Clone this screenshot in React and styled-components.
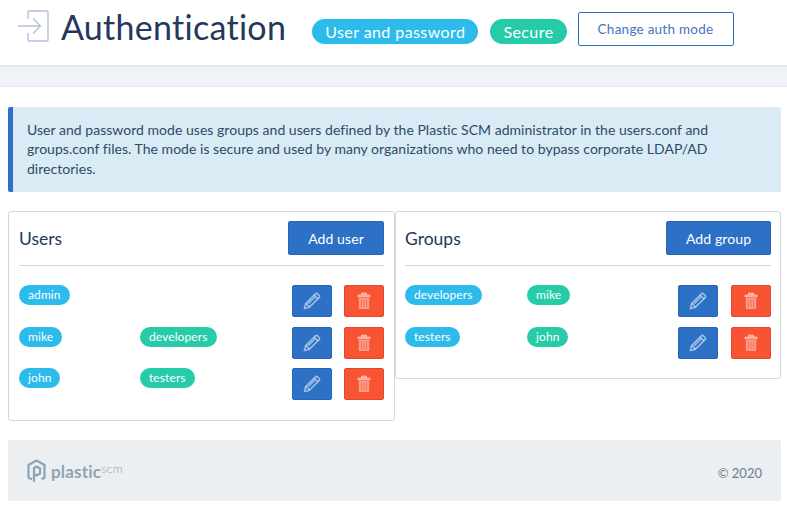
import React from 'react'
import styled, { createGlobalStyle } from 'styled-components'

const GlobalStyle = createGlobalStyle`
  html, body {
    margin: 0;
    background: #fff;
    font-family: Lato, "Open Sans", sans-serif;
    color: #24385b;
  }
  * { box-sizing: border-box; }
`

const Page = styled.div`
  width: 787px;
  height: 505px;
  overflow: hidden;
`

const Header = styled.header`
  display: flex;
  align-items: flex-start;
  height: 67px;
  padding: 10px 0 0 18px;
  border-bottom: 2px solid #e0e9f1;
`

const Title = styled.h1`
  margin: -1px 26px 0 12px;
  font-size: 34px;
  line-height: 36px;
  font-weight: 400;
  color: #24385b;
  letter-spacing: 0.28px;
`

const HeaderIcon = styled.svg`
  width: 31px;
  height: 32px;
  fill: none;
  stroke: #b3c0df;
  stroke-width: 1.4;
`

const Badge = styled.span`
  margin: 9px ${p => p.$green ? 11 : 12}px 0 0;
  padding: 0 13px;
  height: 25px;
  line-height: 25px;
  border-radius: 13px;
  font-size: 16px;
  letter-spacing: 0.42px;
  color: #fff;
  background: ${p => p.$green ? '#26cba8' : '#2dbbeb'};
`

const OutlineButton = styled.button`
  width: 156px;
  height: 34px;
  margin: 2px 0 0 0;
  border: 1px solid #2d71c7;
  border-radius: 2px;
  background: #fff;
  color: #4a72c0;
  font: 13.5px Lato, sans-serif;
  letter-spacing: 0.25px;
`

const Band = styled.div`
  height: 20px;
  background: #eff3f7;
  border-bottom: 1px solid #e0e9f1;
`

const Content = styled.main`
  padding: 20px 6px 0 8px;
`

const Alert = styled.div`
  height: 85px;
  padding: 13px 20px 0 14px;
  border-left: 5px solid #2d71c7;
  border-radius: 2px;
  background: #d9ebf4;
  color: #2f4a68;
  font-size: 14px;
  line-height: 19.3px;
  letter-spacing: 0.03px;
`

const Panels = styled.div`
  display: flex;
  align-items: flex-start;
  margin-top: 19px;
`

const Panel = styled.section`
  width: ${p => p.$width}px;
  height: ${p => p.$height}px;
  padding: 9px ${p => p.$pad}px 0;
  border: 1px solid #d0d9e1;
  border-radius: 3px;
`

const PanelHead = styled.div`
  display: flex;
  justify-content: space-between;
  align-items: center;
  height: 45px;
  padding-bottom: 10px;
  border-bottom: 1px solid #d0d9e1;
  margin-bottom: 19px;
`

const PanelTitle = styled.h2`
  margin: 0;
  font-size: 17.5px;
  font-weight: 400;
  color: #24385b;
`

const AddButton = styled.button`
  width: ${p => p.$width}px;
  height: 34px;
  border: 1px solid #2866b3;
  border-radius: 2px;
  background: #2d71c7;
  color: #fff;
  font: 14px Lato, sans-serif;
  letter-spacing: 0.1px;
`

const Row = styled.div`
  display: grid;
  grid-template-columns: ${p => p.$first}px 1fr auto;
  height: 32px;
  margin-bottom: 9.5px;
`

const Cell = styled.div`
  display: flex;
  align-items: flex-start;
`

const Tag = styled.span`
  height: 20px;
  padding: 0 9px;
  line-height: 20px;
  border-radius: 10px;
  font-size: 12px;
  letter-spacing: 0.1px;
  color: #fff;
  background: ${p => p.$green ? '#26cba8' : '#2dbbeb'};
`

const Actions = styled.div`
  display: flex;
  gap: ${p => p.$gap}px;
`

const IconButton = styled.button`
  display: flex;
  align-items: center;
  justify-content: center;
  width: 40px;
  height: 32px;
  padding: 0;
  border: 1px solid ${p => p.$danger ? '#dd4a30' : '#2866b3'};
  border-radius: 2px;
  background: ${p => p.$danger ? '#f85433' : '#2d71c7'};
`

const PencilGlyph = styled.svg`
  width: 18px;
  height: 18px;
  fill: none;
  stroke: rgba(255, 255, 255, 0.55);
  stroke-width: 1.5;
`

const TrashGlyph = styled.svg`
  width: 14px;
  height: 18px;
`

const Footer = styled.footer`
  display: flex;
  justify-content: space-between;
  height: 61px;
  margin-top: 19px;
  padding: 0 19px;
  border-radius: 3px;
  background: #ebeff2;
`

const Logo = styled.div`
  display: flex;
  align-items: center;
  height: 62px;
  color: #8fa3b5;
`

const LogoMark = styled.svg`
  width: 19px;
  height: 24px;
  fill: none;
  stroke: #8fa3b5;
  stroke-width: 2.2;
`

const LogoName = styled.span`
  margin-left: 5px;
  font-size: 17px;
  font-weight: 700;
  letter-spacing: 0.2px;
`

const LogoSuffix = styled.span`
  font-size: 12.5px;
  font-weight: 300;
  margin-top: -5px;
`

const Copyright = styled.span`
  margin-top: 25px;
  font-size: 13px;
  color: #6d7d8d;
`

const Pencil = () => (
  <PencilGlyph viewBox="0 0 18 18">
    <path d="M1.500 16.500l1.100-4.800L12.400 1.900a1.500 1.500 0 0 1 2.100 0l1.600 1.600a1.500 1.500 0 0 1 0 2.100L6.300 15.400z" />
    <path d="M2.900 11.500l3.600 3.600M11.200 3.200l3.600 3.600M5.200 11.800l7.800-7.800" />
  </PencilGlyph>
)

const Trash = () => (
  <TrashGlyph viewBox="0 0 14 18">
    <path d="M1 3h12v2H1zM4.500 3V1h5v2" fill="rgba(255,255,255,0.4)" stroke="rgba(255,255,255,0.45)" />
    <path d="M1.800 6h10.400v11H1.800z" fill="rgba(255,255,255,0.42)" />
    <path d="M4.500 7.500v8M7 7.500v8M9.500 7.500v8" stroke="rgba(248,84,51,0.6)" strokeWidth="1" fill="none" />
  </TrashGlyph>
)

const ItemRow = ({ name, group, first, gap }) => (
  <Row $first={first}>
    <Cell><Tag>{name}</Tag></Cell>
    <Cell>{group && <Tag $green>{group}</Tag>}</Cell>
    <Actions $gap={gap}>
      <IconButton><Pencil /></IconButton>
      <IconButton $danger><Trash /></IconButton>
    </Actions>
  </Row>
)

export default function App() {
  return (
    <Page>
      <GlobalStyle />
      <Header>
        <HeaderIcon viewBox="0 0 31 32">
          <path d="M10 9V2a1 1 0 0 1 1-1h18a1 1 0 0 1 1 1v28a1 1 0 0 1-1 1H11a1 1 0 0 1-1-1v-7" />
          <path d="M0 16h22M15 8.500l7.500 7.500-7.500 7.500" />
        </HeaderIcon>
        <Title>Authentication</Title>
        <Badge>User and password</Badge>
        <Badge $green>Secure</Badge>
        <OutlineButton>Change auth mode</OutlineButton>
      </Header>
      <Band />
      <Content>
        <Alert>
          User and password mode uses groups and users defined by the Plastic SCM administrator in the users.conf and
          groups.conf files. The mode is secure and used by many organizations who need to bypass corporate LDAP/AD
          directories.
        </Alert>
        <Panels>
          <Panel $width={387} $height={210} $pad={10}>
            <PanelHead>
              <PanelTitle>Users</PanelTitle>
              <AddButton $width={96}>Add user</AddButton>
            </PanelHead>
            <ItemRow name="admin" first={121} gap={12} />
            <ItemRow name="mike" group="developers" first={121} gap={12} />
            <ItemRow name="john" group="testers" first={121} gap={12} />
          </Panel>
          <Panel $width={386} $height={168} $pad={9}>
            <PanelHead>
              <PanelTitle>Groups</PanelTitle>
              <AddButton $width={105}>Add group</AddButton>
            </PanelHead>
            <ItemRow name="developers" group="mike" first={122} gap={13} />
            <ItemRow name="testers" group="john" first={122} gap={13} />
          </Panel>
        </Panels>
        <Footer>
          <Logo>
            <LogoMark viewBox="0 0 19 24">
              <path d="M5 20.500l-3.500-2V6l8-4.500 8 4.500v12.500l-3 1.700" />
              <path d="M7 22.800V9l2.500-1.500L13 9.500v5l-3.500 2L7 15" />
            </LogoMark>
            <LogoName>plastic</LogoName>
            <LogoSuffix>scm</LogoSuffix>
          </Logo>
          <Copyright>© 2020</Copyright>
        </Footer>
      </Content>
    </Page>
  )
}
